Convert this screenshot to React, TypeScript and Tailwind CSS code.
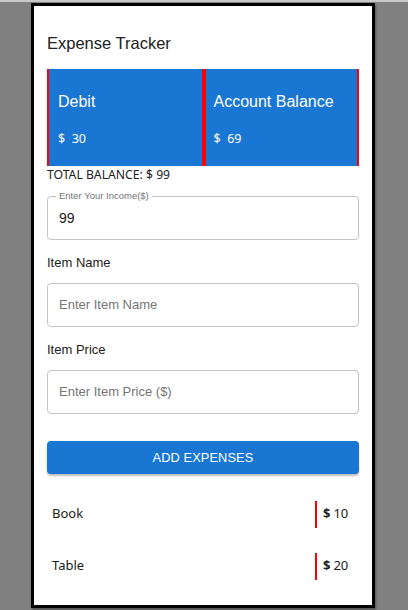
import React from "react";

export default function App() {
  const items = [
    { name: "Book", price: 10 },
    { name: "Table", price: 20 },
  ];
  const field =
    "mt-[11px] h-[44px] rounded-[4px] border border-[#c4c4c4] flex items-center px-[11px]";
  return (
    <div className="min-h-[610px] w-[408px] bg-[#808080] font-['Liberation_Sans',Arial,sans-serif]">
      <div className="h-[2px] w-full bg-[#c9c9c9]" />
      <div className="ml-[31px] mt-[1px] w-[344px] h-[605px] border-[3px] border-black bg-white shadow-[1px_2px_2px_rgba(0,0,0,0.35)] px-[13px]">
        <div className="pt-[25px] text-[16.5px] leading-[24px] text-[#212121]">Expense Tracker</div>
        <div className="mt-[14px] flex h-[97px]">
          <div className="flex-1 bg-[#1976d2] border-x-2 border-[#ff0000] pl-[9px] pt-[22px] text-white">
            <div className="text-[16px] leading-[22px]">Debit</div>
            <div className="mt-[17px] text-[12.5px] leading-[18px] font-['Noto_Sans',sans-serif]">$&nbsp; 30</div>
          </div>
          <div className="flex-1 bg-[#1976d2] border-x-2 border-[#ff0000] pl-[8px] pt-[22px] text-white">
            <div className="text-[16px] leading-[22px]">Account Balance</div>
            <div className="mt-[17px] text-[12.5px] leading-[18px] font-['Noto_Sans',sans-serif]">$&nbsp; 69</div>
          </div>
        </div>
        <div className="text-[12.2px] leading-[18px] text-[#212121] font-['Noto_Sans',sans-serif]">
          TOTAL BALANCE: $ 99
        </div>
        <div className="relative mt-[12px] h-[44px] rounded-[4px] border border-[#c4c4c4] flex items-center px-[11px]">
          <span className="absolute left-[8px] -top-[7px] bg-white px-[3px] text-[9.5px] leading-[12px] text-[#757575]">
            Enter Your Income($)
          </span>
          <span className="text-[14px] text-[#212121]">99</span>
        </div>
        <div className="mt-[14px] text-[13px] leading-[18px] text-[#212121]">Item Name</div>
        <div className={field}>
          <span className="text-[13px] text-[#757575]">Enter Item Name</span>
        </div>
        <div className="mt-[14px] text-[13px] leading-[18px] text-[#212121]">Item Price</div>
        <div className={field}>
          <span className="text-[13px] text-[#757575]">Enter Item Price ($)</span>
        </div>
        <button className="mt-[27px] w-full h-[33px] rounded-[4px] bg-[#1976d2] text-white text-[12.8px] tracking-[0.1px] shadow-[0_2px_2px_rgba(0,0,0,0.25)]">
          ADD EXPENSES
        </button>
        <div className="mt-[14px] font-['Noto_Sans',sans-serif]">
          {items.map((it) => (
            <div key={it.name} className="h-[52px] flex items-center justify-between pl-[5px]">
              <span className="text-[13px] text-[#212121]">{it.name}</span>
              <div className="w-[44px] h-[27px] border-l-2 border-[#ff0000] pl-[6px] flex items-center text-[13px] text-[#212121]">
                <span className="font-bold">$</span>
                <span className="ml-[3px]">{it.price}</span>
              </div>
            </div>
          ))}
        </div>
      </div>
    </div>
  );
}
